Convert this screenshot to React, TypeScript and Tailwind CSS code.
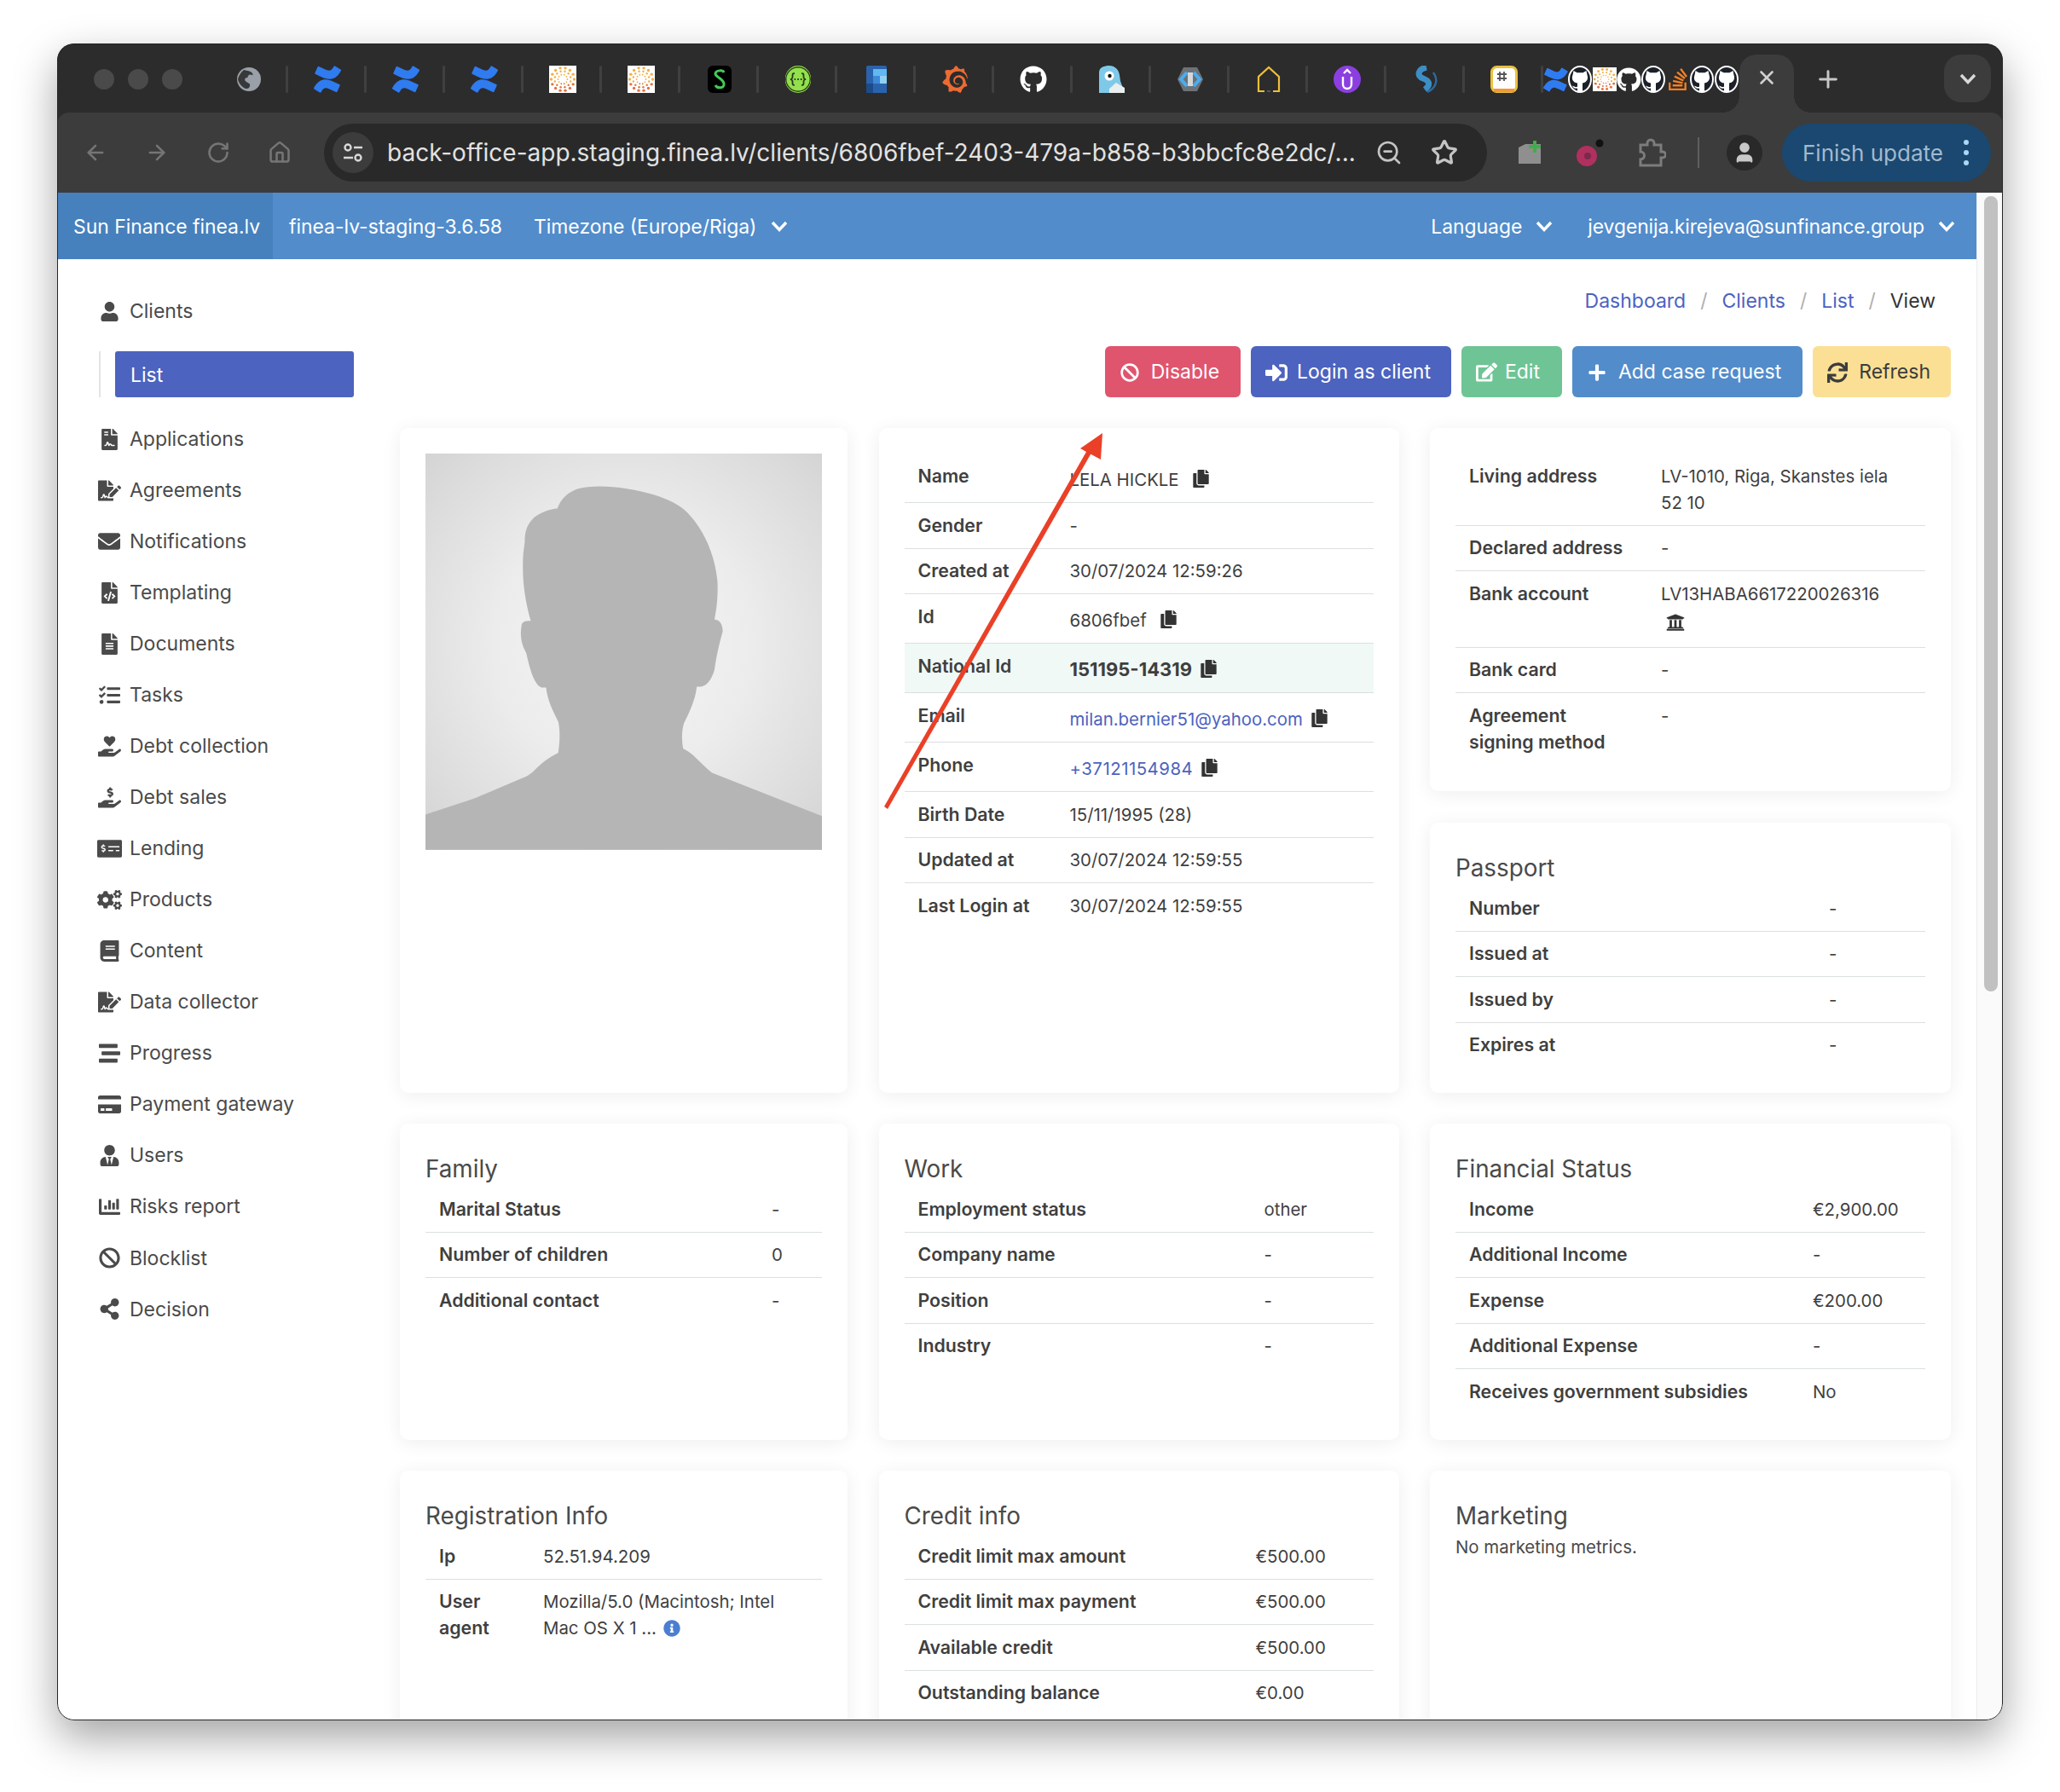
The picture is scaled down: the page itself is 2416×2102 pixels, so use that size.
import type { ReactNode } from "react"
import { Plus, X, ArrowLeft, ArrowRight, RotateCw, Home, ZoomOut, Star, User } from "lucide-react"
import {
  FaBan, FaBook, FaChartBar, FaCogs, FaCopy, FaCreditCard, FaEdit, FaEnvelope, FaFileAlt, FaFileCode,
  FaFileContract, FaFileSignature, FaGithub, FaHandHoldingHeart, FaHandHoldingUsd, FaInfoCircle,
  FaMoneyCheckAlt, FaPlus, FaShareAlt, FaSignInAlt, FaStream, FaSync, FaTasks, FaUniversity, FaUser, FaUserTie,
} from "react-icons/fa"
import { SiConfluence, SiGrafana, SiStackoverflow, SiSwagger } from "react-icons/si"

const navItems = [
  { label: "Applications", icon: FaFileContract, size: 25 },
  { label: "Agreements", icon: FaFileSignature, size: 27 },
  { label: "Notifications", icon: FaEnvelope, size: 26 },
  { label: "Templating", icon: FaFileCode, size: 25 },
  { label: "Documents", icon: FaFileAlt, size: 25 },
  { label: "Tasks", icon: FaTasks, size: 25 },
  { label: "Debt collection", icon: FaHandHoldingHeart, size: 27 },
  { label: "Debt sales", icon: FaHandHoldingUsd, size: 27 },
  { label: "Lending", icon: FaMoneyCheckAlt, size: 29 },
  { label: "Products", icon: FaCogs, size: 29 },
  { label: "Content", icon: FaBook, size: 25 },
  { label: "Data collector", icon: FaFileSignature, size: 27 },
  { label: "Progress", icon: FaStream, size: 25 },
  { label: "Payment gateway", icon: FaCreditCard, size: 27 },
  { label: "Users", icon: FaUserTie, size: 25 },
  { label: "Risks report", icon: FaChartBar, size: 25 },
  { label: "Blocklist", icon: FaBan, size: 25 },
  { label: "Decision", icon: FaShareAlt, size: 25 },
]

function Chev({ className = "" }: { className?: string }) {
  return (
    <svg width="20" height="13" viewBox="0 0 20 13" fill="none" stroke="currentColor" strokeWidth="3.4" className={className}>
      <path d="M2 2l8 8.5L18 2" />
    </svg>
  )
}

function SunDots({ size = 32 }: { size?: number }) {
  const dots = []
  const rings = [
    { r: 5.5, n: 10, d: 0.9 },
    { r: 9.5, n: 12, d: 1.2 },
    { r: 13.5, n: 14, d: 1.7 },
  ]
  rings.forEach((ring, k) => {
    for (let i = 0; i < ring.n; i++) {
      const a = ((i + k * 0.5) / ring.n) * Math.PI * 2
      const cy = 16 + Math.sin(a) * ring.r
      dots.push(
        <circle
          key={`${k}-${i}`}
          cx={16 + Math.cos(a) * ring.r}
          cy={cy}
          r={ring.d}
          fill={cy > 20 ? "#df7444" : "#efb04a"}
        />,
      )
    }
  })
  return (
    <svg width={size} height={size} viewBox="0 0 32 32">
      <rect width="32" height="32" fill="#fff" />
      {dots}
    </svg>
  )
}

function GithubRing() {
  return (
    <svg width="28" height="32" viewBox="0 0 28 32">
      <ellipse cx="14" cy="16" rx="13" ry="15" fill="#1c2029" stroke="#fff" strokeWidth="2" />
      <path
        d="M6.500 6l4 2.200h7L21.500 6l1 5c1.500 4 0 8.500-5.500 9.500V30a14 14 0 0 1-6 0v-3.500c-3 1-5-.5-6-3l2.500 1c1.500 1 3 .5 3.500 0v-4C5 19.500 4 15 5.500 11z"
        fill="#fff"
      />
    </svg>
  )
}

const Conf = ({ size = 32 }: { size?: number }) => <SiConfluence size={size} color="#2f7bf0" />

const tabIcons: ReactNode[] = [
  <svg key="globe" width="30" height="30" viewBox="0 0 30 30">
    <circle cx="15" cy="15" r="14" fill="#9aa0a8" />
    <path d="M9 4c4 1 8 1 10 4s-3 5-6 5-4 3-1 5 5 2 4 5-3 3-5 3c-4-2-8-6-9-11 1-4 3-8 7-11z" fill="#2c2c2c" opacity="0.9" />
    <path d="M15 10c2-1 5 0 5 2s-3 2-5 2-2-3 0-4zM19 17c3-1 6 0 6 2s-3 3-5 2-3-3-1-4z" fill="#9aa0a8" />
  </svg>,
  <Conf key="c1" />,
  <Conf key="c2" />,
  <Conf key="c3" />,
  <SunDots key="s1" />,
  <SunDots key="s2" />,
  <svg key="s" width="28" height="32" viewBox="0 0 28 32">
    <rect width="28" height="32" rx="6" fill="#000" />
    <path d="M19 8c-1-3-9-3-10 1s9 6 10 12-8 6-10 2" stroke="#44c95a" strokeWidth="3" fill="none" />
  </svg>,
  <span key="swagger" className="flex h-[32px] w-[30px] items-center justify-center rounded-full bg-[#92e04c]">
    <SiSwagger size={30} color="#2a3a1c" className="rounded-full bg-[#92e04c]" />
  </span>,
  <svg key="cube" width="24" height="32" viewBox="0 0 24 32">
    <rect width="24" height="32" rx="2" fill="#2a63ad" />
    <rect x="8" y="4" width="16" height="8" fill="#62b8f0" />
    <rect x="8" y="12" width="8" height="9" fill="#3f8ad8" />
    <rect x="16" y="12" width="8" height="9" fill="#8fd0f5" />
    <rect y="21" width="8" height="11" fill="#1c4b8c" />
    <rect x="8" y="21" width="16" height="11" fill="#2a63ad" />
  </svg>,
  <SiGrafana key="grafana" size={32} color="#ec6b33" />,
  <FaGithub key="gh" size={32} color="#fff" />,
  <svg key="gopher" width="32" height="32" viewBox="0 0 32 32">
    <path d="M1 8C1 2 7 0 13 0s11 4 12 11l1 7 5 14H1z" fill="#7fc9e8" />
    <circle cx="13" cy="12" r="5.500" fill="#fff" />
    <circle cx="13.500" cy="12" r="2.200" fill="#111" />
    <path d="M13 27l8-7 10 6v6H13z" fill="#e9eeee" />
  </svg>,
  <svg key="dev" width="32" height="32" viewBox="0 0 32 32">
    <path d="M8 2h16l7 14-7 14H8L1 16z" fill="#6d7278" />
    <path d="M12 8l-7 8 7 8M20 8l7 8-7 8" stroke="#48aef0" strokeWidth="4" fill="none" />
    <path d="M13 8h6v16h-6z" fill="#d2d8dc" />
  </svg>,
  <svg key="house" width="30" height="32" viewBox="0 0 30 32" fill="none" stroke="#f0be3a" strokeWidth="2.2">
    <path d="M10 30H3V13L15 2l12 11v17h-7" />
    <path d="M13 30h4" stroke="#555" />
  </svg>,
  <svg key="u" width="32" height="32" viewBox="0 0 32 32">
    <circle cx="16" cy="16" r="16" fill="#8b3fe0" />
    <path d="M11 13v9a5 5 0 0 0 10 0v-9" stroke="#fff" strokeWidth="2.4" fill="none" />
    <path d="M12 9l4-4 4 4" stroke="#fff" strokeWidth="2.4" fill="none" />
  </svg>,
  <svg key="swirl" width="32" height="32" viewBox="0 0 32 32" fill="none">
    <path d="M17 2C7 4 5 12 13 15s9 8 2 13" stroke="#3c8ec4" strokeWidth="7" />
    <path d="M25 8c6 8 4 18-7 23" stroke="#2c6a9c" strokeWidth="2.500" />
  </svg>,
  <svg key="hash" width="32" height="32" viewBox="0 0 32 32">
    <rect x="1.500" y="1.500" width="29" height="29" rx="6" fill="#fff" stroke="#eac13f" strokeWidth="3" />
    <path d="M4 29h24" stroke="#f2973a" strokeWidth="4" />
    <path d="M11 7v11M16 7v11M8 10h11M8 15h11" stroke="#555" strokeWidth="1.800" />
  </svg>,
]

const clusterIcons: ReactNode[] = [
  <Conf key="c" size={29} />,
  <GithubRing key="g1" />,
  <SunDots key="s" size={28} />,
  <FaGithub key="g2" size={29} color="#fff" />,
  <GithubRing key="g3" />,
  <SiStackoverflow key="so" size={26} color="#f48024" />,
  <GithubRing key="g4" />,
  <GithubRing key="g5" />,
]

function BrowserChrome() {
  return (
    <>
      {/* Tab strip */}
      <div className="flex h-[81px] items-start pt-[26px]">
        <div className="flex w-[179px] gap-[16px] pl-[43px] pt-[4px]">
          <span className="h-[24px] w-[24px] rounded-full bg-[#4a4a4a]" />
          <span className="h-[24px] w-[24px] rounded-full bg-[#4a4a4a]" />
          <span className="h-[24px] w-[24px] rounded-full bg-[#4a4a4a]" />
        </div>
        {tabIcons.map((icon, i) => (
          <div key={i} className="relative flex h-[32px] w-[92px] items-center justify-center">
            {icon}
            <span className="absolute right-0 top-0 h-[32px] w-[3px] rounded bg-[#404040]" />
          </div>
        ))}
        <div className="flex h-[32px] w-[230px] items-center">
          {clusterIcons.map((icon, i) => (
            <div key={i} className="flex w-[28.7px] justify-center">
              {icon}
            </div>
          ))}
        </div>
        <div className="relative -mt-[13px] flex h-[68px] w-[64px] items-start justify-center rounded-t-[20px] bg-[#3c3c3c] pt-[14px]">
          <X size={26} color="#d0d0d0" strokeWidth={2.4} />
          <span className="absolute -left-[20px] bottom-0 h-[20px] w-[20px] bg-[radial-gradient(circle_at_0_0,#2c2c2c_20px,#3c3c3c_20px)]" />
          <span className="absolute -right-[20px] bottom-0 h-[20px] w-[20px] bg-[radial-gradient(circle_at_100%_0,#2c2c2c_20px,#3c3c3c_20px)]" />
        </div>
        <div className="ml-[24px] flex h-[32px] items-center">
          <Plus size={32} color="#c8c8c8" strokeWidth={2.2} />
        </div>
        <div className="ml-auto mr-[14px] -mt-[13px] flex h-[56px] w-[55px] items-center justify-center rounded-[20px] bg-[#3c3c3c] text-[#d8d8d8]">
          <Chev />
        </div>
      </div>

      {/* Toolbar */}
      <div className="flex h-[94px] items-center rounded-t-[14px] bg-[#3c3c3c] pl-[31px] pr-[14px]">
        <div className="flex w-[282px] items-center gap-[44px] text-[#757575]">
          <ArrowLeft size={28} strokeWidth={2.2} />
          <ArrowRight size={28} strokeWidth={2.2} />
          <RotateCw size={28} strokeWidth={2.2} />
          <Home size={28} strokeWidth={2.2} />
        </div>
        <div className="flex h-[68px] w-[1364px] items-center rounded-full bg-[#292929] pl-[10px] pr-[34px]">
          <div className="flex h-[48px] w-[48px] shrink-0 items-center justify-center rounded-full bg-[#3c3c3c]">
            <svg width="24" height="24" viewBox="0 0 24 24" fill="none" stroke="#d8d8d8" strokeWidth="2.4">
              <circle cx="6" cy="6" r="3.5" />
              <path d="M13 6h10M1 18h11" />
              <circle cx="18" cy="18" r="3.5" />
            </svg>
          </div>
          <span className="ml-[16px] whitespace-nowrap text-[28px] text-[#e2e2e2]">
            back-office-app.staging.finea.lv/clients/6806fbef-2403-479a-b858-b3bbcfc8e2dc/...
          </span>
          <ZoomOut size={32} color="#c4c4c4" strokeWidth={2} className="ml-auto" />
          <Star size={32} color="#c4c4c4" strokeWidth={2.4} className="ml-[33px]" />
        </div>
        <div className="ml-[34px] flex items-center gap-[38px]">
          <svg width="32" height="32" viewBox="0 0 32 32">
            <path d="M3 10l8-4h18v23H3z" fill="#8f8f8f" />
            <path d="M22 2v14M15 9h14" stroke="#3fae49" strokeWidth="4" />
          </svg>
          <svg width="34" height="34" viewBox="0 0 34 34">
            <circle cx="13" cy="21" r="12" fill="#b0305f" />
            <circle cx="14" cy="21" r="4" fill="#7a2a4c" />
            <circle cx="28" cy="6" r="4.5" fill="#111" />
          </svg>
          <svg width="34" height="34" viewBox="0 0 34 34" fill="none" stroke="#7c7c7c" strokeWidth="3">
            <path d="M4 8h8V6a4 4 0 0 1 8 0v2h8v8h2a3.500 3.500 0 0 1 0 7h-2v9H4v-7a4.500 4.500 0 0 0 0-9z" />
          </svg>
        </div>
        <span className="ml-[37px] h-[36px] w-[2px] bg-[#5f5f5f]" />
        <div className="ml-[32px] flex h-[42px] w-[42px] items-center justify-center rounded-full bg-[#292929]">
          <User size={28} color="#c8c8c8" fill="#c8c8c8" />
        </div>
        <div className="ml-[23px] flex h-[68px] w-[245px] items-center rounded-full bg-[#1a4870] pl-[24px]">
          <span className="whitespace-nowrap text-[26px] text-[#a3b9cc]">Finish update</span>
          <span className="ml-auto mr-[26px] flex flex-col gap-[6px]">
            <span className="h-[6px] w-[6px] rounded-full bg-[#a9d8f8]" />
            <span className="h-[6px] w-[6px] rounded-full bg-[#a9d8f8]" />
            <span className="h-[6px] w-[6px] rounded-full bg-[#a9d8f8]" />
          </span>
        </div>
      </div>
    </>
  )
}

function Navbar() {
  return (
    <div className="flex h-[78px] items-center bg-[#528ccb] text-[22.9px] text-white">
      <div className="flex h-full w-[253px] items-center bg-[#4781bd] pl-[19px] pt-[2px] whitespace-nowrap">Sun Finance finea.lv</div>
      <span className="ml-[19px] pt-[2px] whitespace-nowrap">finea-lv-staging-3.6.58</span>
      <span className="ml-[37px] pt-[2px] whitespace-nowrap">Timezone (Europe/Riga)</span>
      <Chev className="ml-[17px]" />
      <span className="ml-auto pt-[2px] whitespace-nowrap">Language</span>
      <Chev className="ml-[16px]" />
      <span className="ml-[41px] pt-[2px] tracking-[-0.09px] whitespace-nowrap">jevgenija.kirejeva@sunfinance.group</span>
      <Chev className="ml-[16px] mr-[25px]" />
    </div>
  )
}

function Sidebar() {
  return (
    <aside className="w-[402px] shrink-0 pt-[31px] text-[23px] text-[#4a4a4a]">
      <div className="flex h-[60px] items-center gap-[4px] pl-[41px]">
        <span className="flex w-[40px] justify-center">
          <FaUser size={23} />
        </span>
        Clients
      </div>
      <div className="ml-[49px] mt-[17px] border-l-2 border-[#e4e4e4] pl-[17px]">
        <div className="flex h-[54px] w-[280px] items-center rounded-[3px] bg-[#4c63bf] pl-[18px] pt-[3px] text-white">List</div>
      </div>
      <div className="mt-[19px]">
        {navItems.map(({ label, icon: Icon, size }) => (
          <div key={label} className="flex h-[60.05px] items-center gap-[4px] pl-[41px]">
            <span className="flex w-[40px] justify-center">
              <Icon size={size} />
            </span>
            {label}
          </div>
        ))}
      </div>
    </aside>
  )
}

type Row = { label: ReactNode; value: ReactNode; tall?: boolean; highlight?: boolean }

function InfoTable({ rows, cols }: { rows: Row[]; cols: string }) {
  return (
    <div className="leading-[31px] text-[#3f3f3f]">
      {rows.map((row, i) => (
        <div
          key={i}
          className={`grid ${cols} ${i < rows.length - 1 ? "border-b border-[#dcdfe1]" : ""} ${row.highlight ? "bg-[#f0f9f6]" : ""}`}
        >
          <div className="py-[10.75px] pl-[16px] text-[21.3px] font-semibold">{row.label}</div>
          <div className={`text-[20.4px] ${row.tall ? "pb-[11px] pt-[15px]" : "py-[10.75px]"}`}>{row.value}</div>
        </div>
      ))}
    </div>
  )
}

function Copy({ value, gap = "ml-[15px]" }: { value: ReactNode; gap?: string }) {
  return (
    <span className="flex items-center">
      {value}
      <FaCopy size={21} color="#333" className={`${gap} -mt-[3px]`} />
    </span>
  )
}

function Card({ title, children, className = "" }: { title?: string; children: ReactNode; className?: string }) {
  return (
    <section className={`rounded-[10px] bg-white p-[30px] shadow-[0_3px_22px_rgba(0,0,0,0.07)] ${className}`}>
      {title && <h3 className="pt-[3px] text-[27.8px] leading-[41px] text-[#4a4a4a]">{title}</h3>}
      {children}
    </section>
  )
}

function Portrait() {
  return (
    <div className="h-[465px] w-[465px] bg-[radial-gradient(circle_at_50%_48%,#f5f5f5_0%,#ececec_45%,#dcdcdc_80%,#d2d2d2_100%)]">
      <svg viewBox="109 90 1302 1301" className="h-full w-full">
        <path
          fill="#b5b5b5"
          d="M109 1275 L270 1222 L440 1150 C470 1135 480 1105 545 1072 C550 1040 552 1000 545 970 C525 930 510 900 505 858 L490 858 C465 850 450 790 440 745 C420 710 420 680 425 650 C430 640 445 638 455 640 C435 570 425 500 430 420 L435 380 C435 340 445 320 465 300 C490 280 520 272 542 270 C555 235 580 215 610 205 C650 195 710 195 770 205 C850 218 920 240 960 275 C1020 330 1060 420 1068 510 C1070 560 1065 600 1058 635 C1075 635 1085 650 1085 675 C1075 710 1065 750 1058 800 C1048 835 1030 855 1012 855 L1000 855 C995 900 975 940 958 975 C950 1000 950 1030 955 1058 C990 1075 1010 1105 1050 1138 L1411 1280 L1411 1391 L109 1391 Z"
        />
      </svg>
    </div>
  )
}

const link = "text-[#4c63bf]"

const mainRows: Row[] = [
  { label: "Name", value: <Copy value="LELA HICKLE" />, tall: true },
  { label: "Gender", value: "-" },
  { label: "Created at", value: "30/07/2024 12:59:26" },
  { label: "Id", value: <Copy value="6806fbef" />, tall: true },
  { label: "National Id", value: <Copy value={<b className="text-[22px] font-bold">151195-14319</b>} gap="ml-[9px]" />, tall: true, highlight: true },
  { label: "Email", value: <Copy value={<span className={link}>milan.bernier51@yahoo.com</span>} gap="ml-[9px]" />, tall: true },
  { label: "Phone", value: <Copy value={<span className={`${link} tracking-[0.5px]`}>+37121154984</span>} gap="ml-[9px]" />, tall: true },
  { label: "Birth Date", value: "15/11/1995 (28)" },
  { label: "Updated at", value: "30/07/2024 12:59:55" },
  { label: "Last Login at", value: "30/07/2024 12:59:55" },
]

const addressRows: Row[] = [
  { label: "Living address", value: <>LV-1010, Riga, Skanstes iela<br />52 10</> },
  { label: "Declared address", value: "-" },
  {
    label: "Bank account",
    value: (
      <>
        LV13HABA6617220026316
        <FaUniversity size={22} color="#333" className="ml-[6px] mt-[7px] mb-[7px]" />
      </>
    ),
  },
  { label: "Bank card", value: "-" },
  { label: <>Agreement<br />signing method</>, value: "-" },
]

const pairs = (items: [string, string][]): Row[] => items.map(([label, value]) => ({ label, value }))

export default function App() {
  return (
    <div className="h-[2102px] w-[2416px] overflow-hidden bg-white pl-[67px] pt-[51px] font-['Inter',sans-serif]">
      <div className="relative h-[1967px] w-[2282px] overflow-hidden rounded-[20px] bg-[#2c2c2c] shadow-[0_20px_50px_rgba(0,0,0,0.36)]">
        <BrowserChrome />
        <div className="flex h-[1792px] bg-white">
          <div className="min-w-0 flex-1">
            <Navbar />
            <div className="flex">
              <Sidebar />
              <main className="min-w-0 flex-1 pr-[30px]">
                <div className="flex justify-end gap-[17px] pr-[18px] pt-[32px] text-[23px] leading-[34px] text-[#b0b0b0]">
                  <span className={link}>Dashboard</span>
                  <span>/</span>
                  <span className={link}>Clients</span>
                  <span>/</span>
                  <span className={link}>List</span>
                  <span>/</span>
                  <span className="text-[#333]">View</span>
                </div>
                <div className="mt-[36px] flex justify-end gap-[12px] text-[23px] text-white">
                  <button className="flex h-[60px] items-center gap-[14px] rounded-[6px] bg-[#e0556e] pl-[18px] pr-[25px] pt-[1px]">
                    <FaBan size={22} />
                    Disable
                  </button>
                  <button className="flex h-[60px] items-center gap-[11px] rounded-[6px] bg-[#4c63bf] pl-[17px] pr-[24px] pt-[1px]">
                    <FaSignInAlt size={26} />
                    Login as client
                  </button>
                  <button className="flex h-[60px] items-center gap-[9px] rounded-[6px] bg-[#6fc495] pl-[17px] pr-[26px] pt-[1px]">
                    <FaEdit size={25} />
                    Edit
                  </button>
                  <button className="flex h-[60px] items-center gap-[14px] rounded-[6px] bg-[#528ccb] pl-[18px] pr-[25px] pt-[1px]">
                    <FaPlus size={22} />
                    Add case request
                  </button>
                  <button className="flex h-[60px] items-center gap-[13px] rounded-[6px] bg-[#fbdf94] pl-[17px] pr-[24px] pt-[1px] text-[#3c3c3c]">
                    <FaSync size={24} />
                    Refresh
                  </button>
                </div>

                <div className="mt-[36px] grid grid-cols-[525px_610px_611px] grid-rows-[780px_371px_auto] gap-x-[36.5px] gap-y-[36px]">
                  <Card>
                    <Portrait />
                  </Card>
                  <Card>
                    <InfoTable rows={mainRows} cols="grid-cols-[194px_1fr]" />
                  </Card>
                  <div className="flex flex-col gap-[37px]">
                    <Card className="h-[426px]">
                      <InfoTable rows={addressRows} cols="grid-cols-[241px_1fr]" />
                    </Card>
                    <Card title="Passport" className="flex-1">
                      <InfoTable
                        cols="grid-cols-[438px_1fr]"
                        rows={pairs([["Number", "-"], ["Issued at", "-"], ["Issued by", "-"], ["Expires at", "-"]])}
                      />
                    </Card>
                  </div>

                  <Card title="Family">
                    <InfoTable
                      cols="grid-cols-[406px_1fr]"
                      rows={pairs([["Marital Status", "-"], ["Number of children", "0"], ["Additional contact", "-"]])}
                    />
                  </Card>
                  <Card title="Work">
                    <InfoTable
                      cols="grid-cols-[422px_1fr]"
                      rows={pairs([["Employment status", "other"], ["Company name", "-"], ["Position", "-"], ["Industry", "-"]])}
                    />
                  </Card>
                  <Card title="Financial Status">
                    <InfoTable
                      cols="grid-cols-[419px_1fr]"
                      rows={pairs([
                        ["Income", "€2,900.00"],
                        ["Additional Income", "-"],
                        ["Expense", "€200.00"],
                        ["Additional Expense", "-"],
                        ["Receives government subsidies", "No"],
                      ])}
                    />
                  </Card>

                  <Card title="Registration Info" className="h-[500px]">
                    <InfoTable
                      cols="grid-cols-[138px_1fr]"
                      rows={[
                        { label: "Ip", value: "52.51.94.209" },
                        {
                          label: <>User<br />agent</>,
                          value: (
                            <>
                              Mozilla/5.0 (Macintosh; Intel
                              <br />
                              Mac OS X 1 ...
                              <FaInfoCircle size={20} color="#4a7fd0" className="ml-[8px] inline -mt-[3px]" />
                            </>
                          ),
                        },
                      ]}
                    />
                  </Card>
                  <Card title="Credit info" className="h-[500px]">
                    <InfoTable
                      cols="grid-cols-[412px_1fr]"
                      rows={pairs([
                        ["Credit limit max amount", "€500.00"],
                        ["Credit limit max payment", "€500.00"],
                        ["Available credit", "€500.00"],
                        ["Outstanding balance", "€0.00"],
                      ])}
                    />
                  </Card>
                  <Card title="Marketing" className="h-[500px]">
                    <p className="mt-[3px] text-[20.4px] leading-[26px] text-[#4a4a4a]">No marketing metrics.</p>
                  </Card>
                </div>
              </main>
            </div>
          </div>
          {/* Scrollbar */}
          <div className="w-[31px] shrink-0 border-l border-[#ececec] bg-[#fafafa] pl-[8px] pt-[4px]">
            <div className="h-[933px] w-[16px] rounded-full bg-[#c1c1c1]" />
          </div>
        </div>

        {/* Annotation arrow */}
        <svg viewBox="67 51 2282 1967" className="pointer-events-none absolute inset-0 h-full w-full">
          <polygon points="1037,946 1041,949 1283,526 1278,523" fill="#ea4027" />
          <polygon points="1293,508 1291,539 1267,526" fill="#ea4027" />
        </svg>
        {/* Window edge */}
        <div className="pointer-events-none absolute inset-0 rounded-[20px] border border-[#262626]" />
      </div>
    </div>
  )
}
